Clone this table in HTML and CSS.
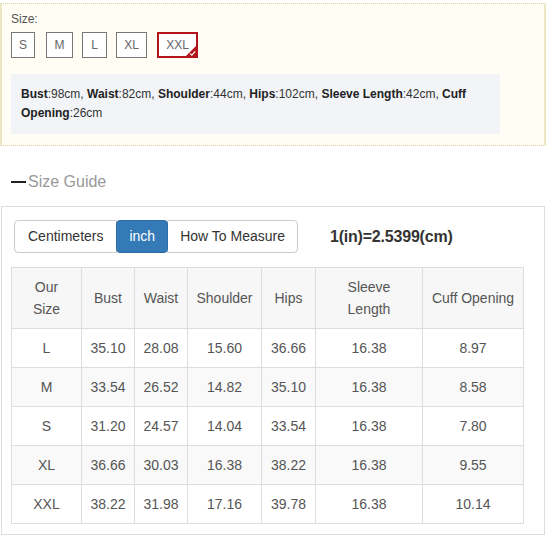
FILE: index.html
```html
<!DOCTYPE html>
<html>
<head>
<meta charset="utf-8">
<link rel="stylesheet" href="styles.css">
</head>
<body>
<div class="wrap">
  <div class="panel">
    <div class="label">Size:</div>
    <div class="sizes">
      <span class="size s-s">S</span>
      <span class="size s-m">M</span>
      <span class="size s-l">L</span>
      <span class="size s-xl">XL</span>
      <span class="size s-xxl active">XXL<span class="tick"><svg width="12" height="12" viewBox="0 0 12 12"><polygon points="12,0 12,12 0,12" fill="#b3151b"/><polyline points="5,8.6 6.9,10.2 10.2,6.4" fill="none" stroke="#fff" stroke-width="1.2"/></svg></span></span>
    </div>
    <div class="info"><b>Bust</b>:98cm, <b>Waist</b>:82cm, <b>Shoulder</b>:44cm, <b>Hips</b>:102cm, <b>Sleeve Length</b>:42cm, <b>Cuff Opening</b>:26cm</div>
  </div>

  <h3 class="guide"><span class="dash"></span>Size Guide</h3>

  <div class="box">
    <div class="toolbar">
      <div class="group">
        <span class="btn first">Centimeters</span><span class="btn on">inch</span><span class="btn last">How To Measure</span>
      </div>
      <div class="ratio">1(in)=2.5399(cm)</div>
    </div>
    <table class="tbl">
      <thead>
        <tr>
          <th class="c1">Our<br>Size</th>
          <th class="c2">Bust</th>
          <th class="c3">Waist</th>
          <th class="c4">Shoulder</th>
          <th class="c5">Hips</th>
          <th class="c6">Sleeve<br>Length</th>
          <th class="c7">Cuff Opening</th>
        </tr>
      </thead>
      <tbody>
        <tr><td>L</td><td>35.10</td><td>28.08</td><td>15.60</td><td>36.66</td><td>16.38</td><td>8.97</td></tr>
        <tr><td>M</td><td>33.54</td><td>26.52</td><td>14.82</td><td>35.10</td><td>16.38</td><td>8.58</td></tr>
        <tr><td>S</td><td>31.20</td><td>24.57</td><td>14.04</td><td>33.54</td><td>16.38</td><td>7.80</td></tr>
        <tr><td>XL</td><td>36.66</td><td>30.03</td><td>16.38</td><td>38.22</td><td>16.38</td><td>9.55</td></tr>
        <tr><td>XXL</td><td>38.22</td><td>31.98</td><td>17.16</td><td>39.78</td><td>16.38</td><td>10.14</td></tr>
      </tbody>
    </table>
  </div>
</div>
</body>
</html>
```

FILE: styles.css
```css
* { box-sizing: border-box; }
html, body { margin: 0; padding: 0; background: #fff; }
body { font-family: "Liberation Sans", Arial, sans-serif; color: #333; }

.wrap { width: 546px; padding-top: 3px; }

.panel {
  background: #fffdf4;
  border-top: 1px dotted #d9d2a9;
  border-bottom: 1px dotted #d9d2a9;
  border-left: 2px solid #ebe6c4;
  border-right: 2px solid #ebe6c4;
  padding: 7px 0 10px 9px;
  height: 143px;
}
.label { font-size: 12px; line-height: 16px; color: #555; }
.sizes { display: flex; margin-top: 5px; }
.size {
  position: relative;
  height: 26px;
  border: 1px solid #777;
  font-size: 12px;
  line-height: 24px;
  text-align: center;
  color: #666;
  background: #fff;
}
.s-s { width: 24px; }
.s-m { width: 27px; margin-left: 11px; }
.s-l { width: 25px; margin-left: 9px; }
.s-xl { width: 31px; margin-left: 9px; }
.s-xxl { width: 41px; margin-left: 10px; }
.size.active { border: 2px solid #b3151b; line-height: 22px; }
.tick { position: absolute; right: -1px; bottom: -1px; width: 12px; height: 12px; display: block; }
.tick svg { display: block; }

.info {
  margin-top: 16px;
  width: 489px;
  background: #f2f4f7;
  padding: 11px 10px;
  font-size: 12px;
  line-height: 19px;
  color: #333;
}
.info b { color: #222; }

.guide {
  display: flex;
  align-items: center;
  margin: 25px 0 0 0;
  padding-left: 11px;
  font-size: 16px;
  font-weight: normal;
  line-height: 22px;
  color: #999;
}
.dash { display: inline-block; width: 15px; height: 2px; background: #222; margin-right: 2px; }

.box {
  margin: 13px 0 0 1px;
  width: 544px;
  border: 1px solid #ddd;
  padding: 13px 9px 10px 9px;
}
.toolbar { display: flex; align-items: center; padding-left: 3px; }
.group { display: flex; }
.btn {
  height: 33px;
  line-height: 31px;
  padding: 0 12px;
  border: 1px solid #ccc;
  font-size: 14px;
  color: #333;
  background: #fff;
  margin-left: -1px;
}
.btn.first { margin-left: 0; border-radius: 4px 0 0 4px; padding: 0 13px; }
.btn.last { border-radius: 0 4px 4px 0; }
.btn.on { background: #337ab7; border-color: #2e6da4; color: #fff; padding: 0 12px; border-radius: 4px; position: relative; }
.ratio { margin-left: 32px; font-size: 16px; font-weight: bold; color: #333; letter-spacing: -0.2px; }

.tbl {
  margin-top: 14px;
  border-collapse: collapse;
  table-layout: fixed;
  width: 512px;
  font-size: 14px;
  color: #555;
}
.tbl th, .tbl td {
  border: 1px solid #ddd;
  padding: 8px 2px;
  line-height: 22px;
  text-align: center;
  font-weight: normal;
}
.tbl thead th { background: #f7f7f7; }
.tbl tbody tr:nth-child(even) td { background: #f9f9f9; }
.c1 { width: 70px; }
.c2 { width: 53px; }
.c3 { width: 53px; }
.c4 { width: 74px; }
.c5 { width: 54px; }
.c6 { width: 107px; }
.c7 { width: 101px; }
```
